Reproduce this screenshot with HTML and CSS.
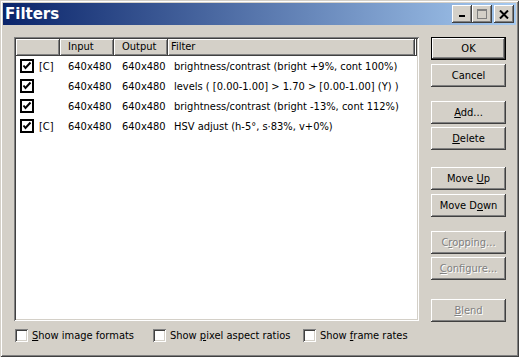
FILE: index.html
```html
<!DOCTYPE html>
<html lang="en">
<head>
  <meta charset="UTF-8">
  <title>Filters</title>
  <link rel="stylesheet" href="styles.css">
</head>
<body>
  <div class="window">
    <div class="titlebar">
      <span class="title">Filters</span>
      <div class="caption-btns">
        <button class="cap">
          <svg width="8" height="8" viewBox="0 0 8 8"><rect x="1" y="5" width="6" height="2" fill="#000"/></svg>
        </button>
        <button class="cap">
          <svg width="10" height="10" viewBox="0 0 10 10"><rect x="0.5" y="0.5" width="9" height="9" fill="none" stroke="#808080"/><rect x="0" y="1" width="10" height="1" fill="#808080"/></svg>
        </button>
        <button class="cap close">
          <svg width="10" height="9" viewBox="0 0 10 9"><path d="M1 0.5 L9 8.5 M9 0.5 L1 8.5" stroke="#000" stroke-width="2"/></svg>
        </button>
      </div>
    </div>

    <div class="content">
      <div class="main">
        <div class="listbox">
          <div class="list-header">
            <div class="hcell c-check"></div>
            <div class="hcell c-in">Input</div>
            <div class="hcell c-out">Output</div>
            <div class="hcell c-filter">Filter</div>
            <div class="hcell c-rest"></div>
          </div>
          <div class="row">
            <div class="c-check"><span class="tick"></span><span class="tag">[C]</span></div>
            <div class="c-in">640x480</div>
            <div class="c-out">640x480</div>
            <div class="c-filter">brightness/contrast (bright +9%, cont 100%)</div>
          </div>
          <div class="row">
            <div class="c-check"><span class="tick"></span></div>
            <div class="c-in">640x480</div>
            <div class="c-out">640x480</div>
            <div class="c-filter">levels ( [0.00-1.00] &gt; 1.70 &gt; [0.00-1.00] (Y) )</div>
          </div>
          <div class="row">
            <div class="c-check"><span class="tick"></span></div>
            <div class="c-in">640x480</div>
            <div class="c-out">640x480</div>
            <div class="c-filter">brightness/contrast (bright -13%, cont 112%)</div>
          </div>
          <div class="row">
            <div class="c-check"><span class="tick"></span><span class="tag">[C]</span></div>
            <div class="c-in">640x480</div>
            <div class="c-out">640x480</div>
            <div class="c-filter">HSV adjust (h-5&deg;, s&middot;83%, v+0%)</div>
          </div>
        </div>

        <div class="options">
          <label class="opt opt-formats"><span class="box"></span><span><u>S</u>how image formats</span></label>
          <label class="opt opt-aspect"><span class="box"></span><span>Show <u>p</u>ixel aspect ratios</span></label>
          <label class="opt"><span class="box"></span><span>Show <u>f</u>rame rates</span></label>
        </div>
      </div>

      <div class="buttons">
        <button class="btn default">OK</button>
        <button class="btn b-cancel">Cancel</button>
        <button class="btn b-add"><u>A</u>dd...</button>
        <button class="btn b-delete"><u>D</u>elete</button>
        <button class="btn b-up">Move <u>U</u>p</button>
        <button class="btn b-down">Move D<u>o</u>wn</button>
        <button class="btn b-crop" disabled>C<u>r</u>opping...</button>
        <button class="btn b-config" disabled><u>C</u>onfigure...</button>
        <button class="btn b-blend" disabled><u>B</u>lend</button>
      </div>
    </div>
  </div>
</body>
</html>
```

FILE: styles.css
```css
* {
  box-sizing: border-box;
}
body {
  margin: 0;
  background: #d4d0c8;
  font-family: "DejaVu Sans Condensed", "DejaVu Sans", sans-serif;
  font-stretch: condensed;
  font-size: 11px;
  color: #000;
}
.window {
  width: 519px;
  height: 357px;
  padding: 3px;
  background: #d4d0c8;
  box-shadow: inset 1px 1px #d4d0c8, inset -1px -1px #404040, inset 2px 2px #fff, inset -2px -2px #808080;
  display: flex;
  flex-direction: column;
}
.titlebar {
  height: 22px;
  background: linear-gradient(to right, #0a246a, #a6caf0);
  display: flex;
  align-items: center;
  justify-content: space-between;
  padding: 0 2px 0 2px;
}
.title {
  color: #fff;
  font-family: "DejaVu Sans", sans-serif;
  font-stretch: normal;
  font-weight: bold;
  font-size: 15px;
}
.caption-btns {
  display: flex;
  align-items: center;
}
.cap {
  width: 20px;
  height: 18px;
  padding: 0;
  border: none;
  background: #d4d0c8;
  box-shadow: inset -1px -1px #404040, inset 1px 1px #fff, inset -2px -2px #808080;
  display: flex;
  align-items: center;
  justify-content: center;
}
.cap.close {
  margin-left: 2px;
}

.content {
  flex: 1;
  display: flex;
  padding: 12px 0 0 11px;
}
.main {
  width: 405px;
}
.listbox {
  height: 284px;
  background: #fff;
  padding: 2px;
  box-shadow: inset 1px 1px #808080, inset -1px -1px #fff, inset 2px 2px #404040, inset -2px -2px #d4d0c8;
}
.list-header {
  display: flex;
  height: 17px;
}
.hcell {
  background: #d4d0c8;
  box-shadow: inset -1px -1px #404040, inset 1px 1px #fff, inset -2px -2px #808080;
  line-height: 16px;
}
.row {
  display: flex;
  height: 20px;
  align-items: center;
  white-space: nowrap;
}
.c-check {
  width: 44px;
  display: flex;
  align-items: center;
  padding-left: 4px;
}
.c-in,
.c-out {
  width: 54px;
  padding-left: 8px;
}
.c-filter {
  width: 247px;
  padding-left: 6px;
}
.hcell.c-filter {
  padding-left: 3px;
}
.c-rest {
  flex: 1;
}
.tick {
  width: 14px;
  height: 14px;
  border: 2px solid #000;
  background: #fff url("data:image/svg+xml,%3Csvg xmlns='http://www.w3.org/2000/svg' width='10' height='10'%3E%3Cpath d='M1.5 4.5 L3.5 7 L8.5 1.5' fill='none' stroke='%23000' stroke-width='2'/%3E%3C/svg%3E") center no-repeat;
}
.tag {
  margin-left: 5px;
}

.options {
  display: flex;
  align-items: center;
  margin-top: 8px;
  padding-left: 1px;
}
.opt {
  display: flex;
  align-items: center;
  white-space: nowrap;
}
.opt-formats {
  width: 138px;
}
.opt-aspect {
  width: 150px;
}
.box {
  width: 13px;
  height: 13px;
  margin-right: 4px;
  background: #fff;
  box-shadow: inset 1px 1px #808080, inset -1px -1px #fff, inset 2px 2px #404040, inset -2px -2px #d4d0c8;
}

.buttons {
  display: flex;
  flex-direction: column;
  margin-left: 12px;
}
.btn {
  width: 75px;
  height: 23px;
  padding: 0;
  border: none;
  background: #d4d0c8;
  font: inherit;
  color: #000;
  box-shadow: inset -1px -1px #404040, inset 1px 1px #fff, inset -2px -2px #808080;
}
.btn.default {
  box-shadow: inset 0 0 0 1px #000, inset -2px -2px #404040, inset 2px 2px #fff, inset -3px -3px #808080;
}
.btn:disabled {
  color: #808080;
  text-shadow: 1px 1px #fff;
}
.b-cancel { margin-top: 4px; }
.b-add { margin-top: 14px; }
.b-delete { margin-top: 3px; }
.b-up { margin-top: 17px; }
.b-down { margin-top: 4px; }
.b-crop { margin-top: 14px; }
.b-config { margin-top: 3px; }
.b-blend { margin-top: 19px; }
```
